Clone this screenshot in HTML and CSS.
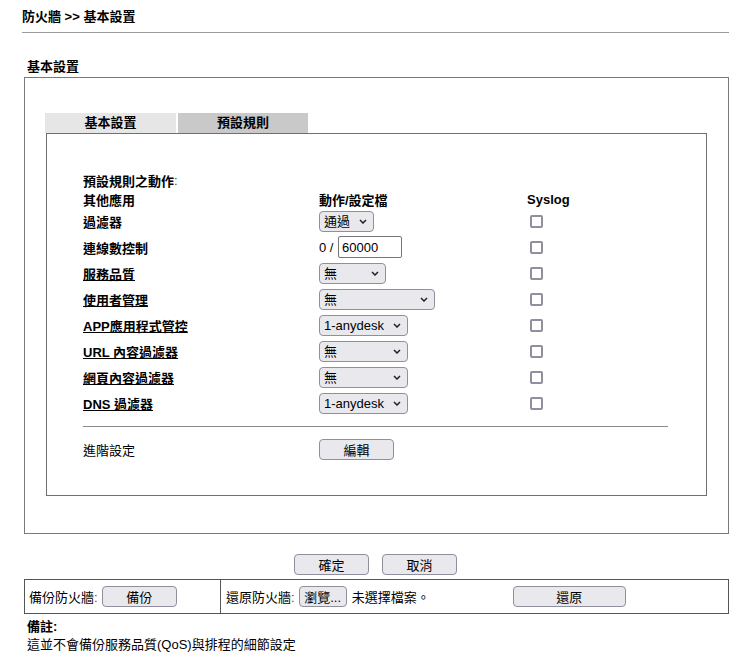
FILE: index.html
```html
<!DOCTYPE html>
<html lang="zh-Hant">
<head>
<meta charset="utf-8">
<title>防火牆 >> 基本設置</title>
<link rel="stylesheet" href="styles.css">
</head>
<body>
<div class="page">
  <div class="title">防火牆 &gt;&gt; 基本設置</div>
  <div class="section-head">基本設置</div>
  <div class="outer">
    <div class="tabs">
      <div class="tab tab-light">基本設置</div>
      <div class="tab tab-active">預設規則</div>
    </div>
    <div class="inner">
      <div class="grid">
        <div class="cell b hrow">預設規則之動作<span class="colon">:</span></div>
        <div class="cell hrow"></div>
        <div class="cell hrow"></div>

        <div class="cell b hrow">其他應用</div>
        <div class="cell b hrow">動作/設定檔</div>
        <div class="cell b hrow">Syslog</div>

        <div class="cell b row">過濾器</div>
        <div class="cell row"><span class="sel w55"><select><option>通過</option></select><svg class="chev" width="8" height="5" viewBox="0 0 8 5"><path d="M1 1 L4 4 L7 1" fill="none" stroke="#222" stroke-width="1.5"/></svg></span></div>
        <div class="cell row"><input class="cb" type="checkbox"></div>

        <div class="cell b row">連線數控制</div>
        <div class="cell row"><span class="frac">0 / </span><input class="txt" type="text" value="60000"></div>
        <div class="cell row"><input class="cb" type="checkbox"></div>

        <div class="cell b row"><a href="#">服務品質</a></div>
        <div class="cell row"><span class="sel w67"><select><option>無</option></select><svg class="chev" width="8" height="5" viewBox="0 0 8 5"><path d="M1 1 L4 4 L7 1" fill="none" stroke="#222" stroke-width="1.5"/></svg></span></div>
        <div class="cell row"><input class="cb" type="checkbox"></div>

        <div class="cell b row"><a href="#">使用者管理</a></div>
        <div class="cell row"><span class="sel w116"><select><option>無</option></select><svg class="chev" width="8" height="5" viewBox="0 0 8 5"><path d="M1 1 L4 4 L7 1" fill="none" stroke="#222" stroke-width="1.5"/></svg></span></div>
        <div class="cell row"><input class="cb" type="checkbox"></div>

        <div class="cell b row"><a href="#">APP應用程式管控</a></div>
        <div class="cell row"><span class="sel w89"><select><option>1-anydesk</option></select><svg class="chev" width="8" height="5" viewBox="0 0 8 5"><path d="M1 1 L4 4 L7 1" fill="none" stroke="#222" stroke-width="1.5"/></svg></span></div>
        <div class="cell row"><input class="cb" type="checkbox"></div>

        <div class="cell b row"><a href="#">URL 內容過濾器</a></div>
        <div class="cell row"><span class="sel w89"><select><option>無</option></select><svg class="chev" width="8" height="5" viewBox="0 0 8 5"><path d="M1 1 L4 4 L7 1" fill="none" stroke="#222" stroke-width="1.5"/></svg></span></div>
        <div class="cell row"><input class="cb" type="checkbox"></div>

        <div class="cell b row"><a href="#">網頁內容過濾器</a></div>
        <div class="cell row"><span class="sel w89"><select><option>無</option></select><svg class="chev" width="8" height="5" viewBox="0 0 8 5"><path d="M1 1 L4 4 L7 1" fill="none" stroke="#222" stroke-width="1.5"/></svg></span></div>
        <div class="cell row"><input class="cb" type="checkbox"></div>

        <div class="cell b row"><a href="#">DNS 過濾器</a></div>
        <div class="cell row"><span class="sel w89"><select><option>1-anydesk</option></select><svg class="chev" width="8" height="5" viewBox="0 0 8 5"><path d="M1 1 L4 4 L7 1" fill="none" stroke="#222" stroke-width="1.5"/></svg></span></div>
        <div class="cell row"><input class="cb" type="checkbox"></div>
      </div>
      <div class="sep"></div>
      <div class="grid">
        <div class="cell row">進階設定</div>
        <div class="cell row"><button class="btn w75">編輯</button></div>
        <div class="cell row"></div>
      </div>
    </div>
  </div>
  <div class="actions">
    <button class="btn w75">確定</button>
    <button class="btn w75">取消</button>
  </div>
  <div class="backup">
    <div class="bcell bcell1">
      <span>備份防火牆<span class="colon">:</span></span>
      <button class="btn w75 ml">備份</button>
    </div>
    <div class="bcell bcell2">
      <span>還原防火牆<span class="colon">:</span></span>
      <button class="btn w48 ml">瀏覽...</button>
      <span class="nofile">未選擇檔案。</span>
      <button class="btn w113 restore">還原</button>
    </div>
  </div>
  <div class="note-head">備註:</div>
  <div class="note">這並不會備份服務品質(QoS)與排程的細節設定</div>
</div>
</body>
</html>
```

FILE: styles.css
```css
html, body {
  margin: 0;
  padding: 0;
  background: #fff;
}
body {
  font-family: "Liberation Sans", Arial, "Noto Sans CJK TC", sans-serif;
  font-size: 13px;
  color: #000;
}
.page {
  margin-left: 22px;
  width: 707px;
}
.title {
  font-weight: bold;
  line-height: 16px;
  padding-top: 9px;
  padding-bottom: 7px;
  border-bottom: 1px solid #9a9a9a;
}
.section-head {
  font-weight: bold;
  line-height: 16px;
  margin-top: 26px;
  padding-left: 5px;
  margin-bottom: 2px;
}
.outer {
  margin-left: 2px;
  width: 705px;
  box-sizing: border-box;
  border: 1px solid #7a7a7a;
  padding: 35px 21px 37px 21px;
}
.tabs {
  display: flex;
  gap: 2px;
  margin-left: -1px;
  height: 20px;
}
.tab {
  font-weight: bold;
  line-height: 20px;
  text-align: center;
}
.tab-light {
  width: 131px;
  background: #e6e6e6;
}
.tab-active {
  width: 130px;
  background: #c9c9c9;
}
.inner {
  border: 1px solid #707070;
  padding: 37px 38px 32px 36px;
}
.grid {
  display: grid;
  grid-template-columns: 236px 208px 1fr;
}
.cell {
  display: flex;
  align-items: center;
}
.b {
  font-weight: bold;
}
.b a {
  color: #000;
  text-decoration: underline;
}
.colon {
  font-weight: normal;
  color: #444;
}
.hrow {
  height: 19px;
  padding-bottom: 1px;
  box-sizing: border-box;
}
.row {
  height: 26px;
  padding-bottom: 2px;
  box-sizing: border-box;
}
.sel {
  position: relative;
  display: inline-block;
  height: 21px;
}
.sel select {
  appearance: none;
  -webkit-appearance: none;
  height: 21px;
  width: 100%;
  box-sizing: border-box;
  margin: 0;
  padding: 0 0 0 4px;
  border: 1px solid #8f8f9d;
  border-radius: 4px;
  background: #e9e9ed;
  font-family: "Liberation Sans", Arial, "Noto Sans CJK TC", sans-serif;
  font-size: 13px;
  color: #000;
}
.chev {
  position: absolute;
  right: 7px;
  top: 8px;
  pointer-events: none;
}
.w55 { width: 55px; }
.w67 { width: 67px; }
.w116 { width: 116px; }
.w89 { width: 89px; }
.frac {
  white-space: pre;
  margin-right: 1px;
}
.txt {
  width: 64px;
  height: 22px;
  box-sizing: border-box;
  margin: 0;
  padding: 0 0 0 3px;
  border: 1px solid #767676;
  border-radius: 2px;
  font-family: "Liberation Sans", Arial, sans-serif;
  font-size: 13px;
  color: #000;
}
.cb {
  appearance: none;
  -webkit-appearance: none;
  width: 13px;
  height: 13px;
  margin: 0 0 0 3px;
  box-sizing: border-box;
  border: 2px solid #8f8f9d;
  border-radius: 2px;
  background: #fff;
}
.sep {
  border-top: 1px solid #8a8a8a;
  margin-top: 9px;
  margin-bottom: 10px;
}
.btn {
  height: 21px;
  box-sizing: border-box;
  margin: 0;
  padding: 0;
  border: 1px solid #8f8f9d;
  border-radius: 4px;
  background: #e9e9ed;
  font-family: "Liberation Sans", Arial, "Noto Sans CJK TC", sans-serif;
  font-size: 13px;
  color: #000;
}
.w75 { width: 75px; }
.w48 { width: 48px; }
.w113 { width: 113px; }
.actions {
  display: flex;
  justify-content: center;
  gap: 13px;
  margin-top: 20px;
}
.backup {
  margin-left: 2px;
  width: 705px;
  box-sizing: border-box;
  margin-top: 4px;
  height: 35px;
  display: flex;
  border: 1px solid #555;
}
.bcell {
  display: flex;
  align-items: center;
}
.bcell1 {
  width: 196px;
  padding-left: 4px;
  box-sizing: border-box;
  border-right: 1px solid #555;
}
.bcell2 {
  flex: 1;
  padding-left: 5px;
}
.ml {
  margin-left: 4px;
}
.nofile {
  margin-left: 5px;
}
.restore {
  margin-left: 83px;
}
.note-head {
  font-weight: bold;
  line-height: 16px;
  margin-top: 5px;
  padding-left: 5px;
}
.note {
  line-height: 16px;
  margin-top: 2px;
  padding-left: 5px;
}
```
